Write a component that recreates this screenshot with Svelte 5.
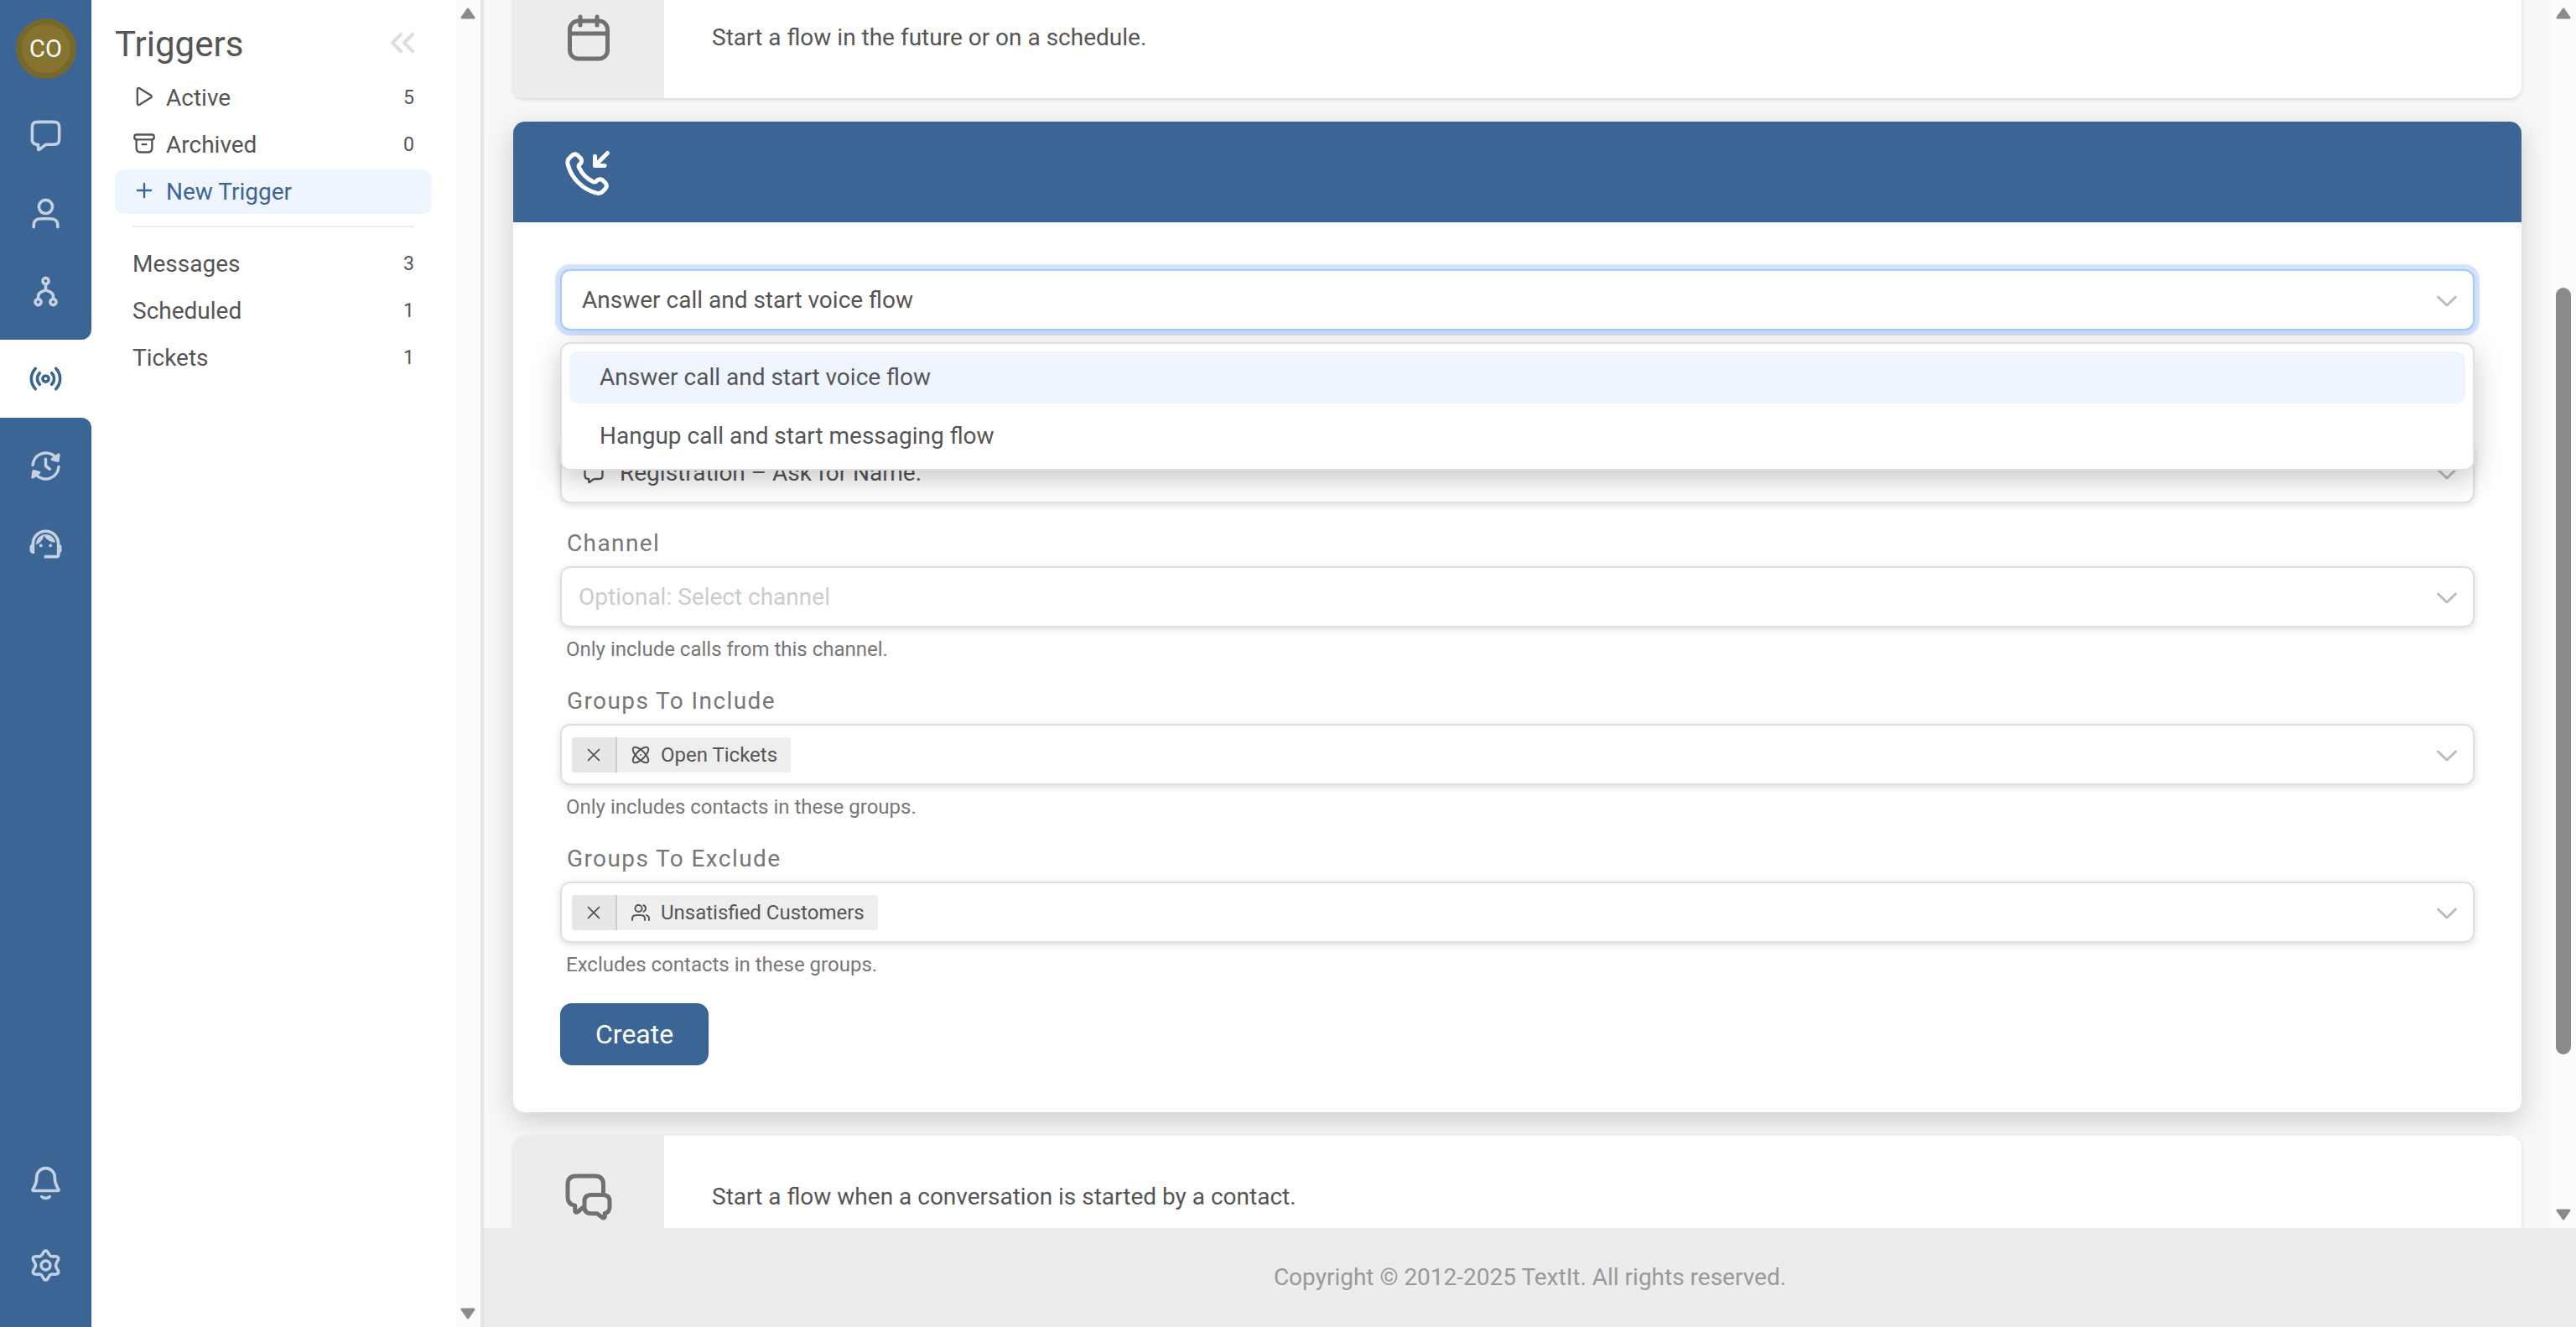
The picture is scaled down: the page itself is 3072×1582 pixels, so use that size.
<script>
  const railTop = [
    { name: 'Messages', icon: 'message' },
    { name: 'Contacts', icon: 'contact' },
    { name: 'Flows', icon: 'flow' },
  ];
  const railRest = [
    { name: 'Campaigns', icon: 'campaign' },
    { name: 'Tickets', icon: 'agent' },
  ];
  const railBottom = [
    { name: 'Notifications', icon: 'bell' },
    { name: 'Settings', icon: 'settings' },
  ];

  const folders = [
    { name: 'Active', icon: 'play', count: 5 },
    { name: 'Archived', icon: 'archive', count: 0 },
    { name: 'New Trigger', icon: 'plus', selected: true },
  ];
  const types = [
    { name: 'Messages', count: 3 },
    { name: 'Scheduled', count: 1 },
    { name: 'Tickets', count: 1 },
  ];

  const actions = ['Answer call and start voice flow', 'Hangup call and start messaging flow'];
  let action = $state(actions[0]);

  let groupFields = $state([
    {
      id: 'include',
      label: 'Groups To Include',
      help: 'Only includes contacts in these groups.',
      groups: [{ name: 'Open Tickets', icon: 'smart' }],
    },
    {
      id: 'exclude',
      label: 'Groups To Exclude',
      help: 'Excludes contacts in these groups.',
      groups: [{ name: 'Unsatisfied Customers', icon: 'group' }],
    },
  ]);

  // share of the scroll track, in percent
  const thumb = { before: 22.2, size: 65.3 };

  function removeGroup(field, name) {
    field.groups = field.groups.filter((g) => g.name !== name);
  }
</script>

{#snippet icon(name)}
  <svg class="icon" viewBox="0 0 24 24" aria-hidden="true">
    {#if name === 'message'}
      <path d="M7 18V20.3C7 20.9 7 21.1 7.1 21.3C7.2 21.4 7.35 21.46 7.5 21.46C7.7 21.46 7.9 21.3 8.3 20.96L10.7 19.05C11.2 18.66 11.4 18.47 11.7 18.33C11.9 18.2 12.2 18.1 12.45 18.06C12.75 18 13.06 18 13.7 18H16.2C17.9 18 18.7 18 19.4 17.67C19.9 17.4 20.4 16.9 20.7 16.36C21 15.7 21 14.9 21 13.2V7.8C21 6.1 21 5.3 20.7 4.64C20.4 4.07 19.9 3.6 19.4 3.33C18.7 3 17.9 3 16.2 3H7.8C6.1 3 5.3 3 4.64 3.33C4.07 3.6 3.6 4.07 3.33 4.64C3 5.3 3 6.1 3 7.8V14C3 14.9 3 15.4 3.1 15.8C3.4 16.8 4.2 17.6 5.2 17.9C5.6 18 6.1 18 7 18Z" />
    {:else if name === 'contact'}
      <path d="M20 21C20 19.6 20 18.9 19.8 18.3C19.4 17.1 18.4 16.1 17.2 15.7C16.6 15.5 15.9 15.5 14.5 15.5H9.5C8.1 15.5 7.4 15.5 6.8 15.7C5.6 16.1 4.6 17.1 4.2 18.3C4 18.9 4 19.6 4 21" />
      <circle cx="12" cy="7.5" r="4.5" />
    {:else if name === 'flow'}
      <circle cx="12" cy="5" r="2" />
      <circle cx="7" cy="19" r="2" />
      <circle cx="17" cy="19" r="2" />
      <path d="M12 7V10.2M7 17V15.4C7 13.8 7.7 12.9 9 12.3L11 11.5C11.8 11.2 12 10.8 12 10.2C12 10.8 12.2 11.2 13 11.5L15 12.3C16.3 12.9 17 13.8 17 15.4V17" />
    {:else if name === 'trigger'}
      <circle cx="12" cy="12" r="2" />
      <path d="M8 8.2C5.9 10.4 5.9 13.6 8 15.8M16 8.2C18.1 10.4 18.1 13.6 16 15.8M5.2 5.2C1.5 9.2 1.5 14.8 5.2 18.8M18.8 5.2C22.5 9.2 22.5 14.8 18.8 18.8" />
    {:else if name === 'campaign'}
      <path d="M3.4 11.4A8.7 8.7 0 0 1 18.4 6.1M20.6 12.6A8.7 8.7 0 0 1 5.6 17.9M12 7.4V12L14.6 14" />
      <path class="filled" d="M20.6 4.6L20 8.5L16.4 7.6ZM3.4 19.4L4 15.5L7.6 16.4Z" />
    {:else if name === 'agent'}
      <g class="glyph">
        <path d="M21 12.22C21 6.73 16.74 3 12 3c-4.69 0-9 3.65-9 9.28-.6.34-1 .98-1 1.72v2c0 1.1.9 2 2 2h1v-6.1c0-3.87 3.13-7 7-7s7 3.13 7 7V19h-8v2h8c1.1 0 2-.9 2-2v-1.22c.59-.31 1-.92 1-1.64v-2.3c0-.7-.41-1.31-1-1.62z" />
        <circle cx="9" cy="13" r="1" />
        <circle cx="15" cy="13" r="1" />
        <path d="M18 11.03C17.52 8.18 15.04 6 12.05 6c-3.03 0-6.29 2.51-6.03 6.45 2.47-1.01 4.33-3.21 4.86-5.89 1.31 2.63 4 4.44 7.12 4.47z" />
      </g>
    {:else if name === 'bell'}
      <path d="M9.35 21C10.06 21.6 10.98 22 12 22C13 22 13.94 21.6 14.65 21M18 8C18 6.4 17.4 4.9 16.2 3.76C15.1 2.6 13.6 2 12 2C10.4 2 8.9 2.6 7.76 3.76C6.6 4.9 6 6.4 6 8C6 11.1 5.2 13.2 4.35 14.6C3.6 15.8 3.25 16.4 3.26 16.54C3.28 16.7 3.3 16.8 3.46 16.9C3.6 17 4.2 17 5.4 17H18.6C19.8 17 20.4 17 20.54 16.9C20.7 16.8 20.72 16.7 20.74 16.54C20.75 16.4 20.4 15.8 19.65 14.6C18.8 13.2 18 11.1 18 8Z" />
    {:else if name === 'settings'}
      <circle cx="12" cy="12" r="3" />
      <path d="M12 2.2C13 2.2 13.5 3.1 14.1 4.4C14.7 5.8 15.4 6.2 16.8 6.1C18.4 5.9 19.6 5.7 20.3 6.8C20.9 7.9 20.3 8.8 19.4 10C18.5 11.3 18.5 12.7 19.4 14C20.3 15.2 20.9 16.1 20.3 17.2C19.6 18.3 18.4 18.1 16.8 17.9C15.4 17.8 14.7 18.2 14.1 19.6C13.5 20.9 13 21.8 12 21.8C11 21.8 10.5 20.9 9.9 19.6C9.3 18.2 8.6 17.8 7.2 17.9C5.6 18.1 4.4 18.3 3.7 17.2C3.1 16.1 3.7 15.2 4.6 14C5.5 12.7 5.5 11.3 4.6 10C3.7 8.8 3.1 7.9 3.7 6.8C4.4 5.7 5.6 5.9 7.2 6.1C8.6 6.2 9.3 5.8 9.9 4.4C10.5 3.1 11 2.2 12 2.2Z" />
    {:else if name === 'play'}
      <path d="M5 4.9C5 3.5 6.1 2.9 7.2 3.6L18.9 10.9C19.8 11.5 19.8 12.5 18.9 13.1L7.2 20.4C6.1 21.1 5 20.5 5 19.1Z" />
    {:else if name === 'archive'}
      <rect x="2" y="3" width="20" height="5" rx="2" />
      <path d="M4 8V16.5C4 19.6 5.2 21 8.2 21H15.8C18.8 21 20 19.6 20 16.5V8M10 13H14" />
    {:else if name === 'plus'}
      <path d="M12 5V19M5 12H19" />
    {:else if name === 'collapse'}
      <path d="M18 17L13 12L18 7M11 17L6 12L11 7" />
    {:else if name === 'calendar'}
      <rect x="3" y="4" width="18" height="18" rx="4" />
      <path d="M3 10H21M16 2V6M8 2V6" />
    {:else if name === 'call'}
      <path transform="translate(-1 1)" d="M8.4 8.85C9.1 10.3 10 11.7 11.2 12.9C12.4 14.1 13.8 15 15.2 15.7C15.4 15.8 15.4 15.8 15.5 15.82C15.8 15.9 16.1 15.8 16.4 15.7C16.4 15.6 16.5 15.6 16.6 15.46C17 15.1 17.1 14.9 17.3 14.8C18 14.4 18.8 14.4 19.5 14.8C19.7 14.9 19.8 15.1 20.2 15.46L20.4 15.65C20.9 16.2 21.2 16.4 21.3 16.7C21.6 17.3 21.6 18 21.3 18.5C21.2 18.8 20.9 19.1 20.4 19.6L20.2 19.8C19.7 20.3 19.4 20.6 19.1 20.8C18.7 21 18 21.16 17.6 21.16C17.2 21.16 16.9 21.1 16.3 20.9C13.3 20.1 10.4 18.4 8 16C5.7 13.7 4 10.8 3.2 7.8C3 7.2 2.93 6.9 2.93 6.5C2.93 6 3.1 5.4 3.3 5C3.5 4.7 3.8 4.4 4.3 3.9L4.5 3.7C5 3.2 5.3 2.9 5.55 2.77C6.1 2.5 6.8 2.5 7.36 2.77C7.6 2.9 7.9 3.2 8.4 3.7L8.6 3.9C9 4.3 9.2 4.4 9.27 4.6C9.7 5.3 9.7 6.1 9.27 6.8C9.2 7 9 7.1 8.6 7.5C8.5 7.6 8.5 7.7 8.4 7.7C8.2 8 8.2 8.3 8.27 8.6C8.3 8.7 8.3 8.7 8.4 8.85Z" />
      <path d="M15 4.5V9H19.6M15 9L21 3" />
    {:else if name === 'conversation'}
      <path d="M9 17.2L6.9 19C6.2 19.6 5.5 19.3 5.5 18.5V16.1C3.4 15.8 2 14.5 2 12V6C2 3.3 3.3 2 6 2H15C17.7 2 19 3.3 19 6V11" />
      <path d="M13.4 11H18.6C20.8 11 22 12 22 14V16.6C22 18.6 21.2 19.5 19.7 19.8V21.3C19.7 22 19 22.2 18.4 21.7L16 19.9H13.4C11.2 19.9 10 18.9 10 16.9V14C10 12 11.2 11 13.4 11Z" />
    {:else if name === 'chevron'}
      <path d="M1.5 8L12 18L22.5 8" />
    {:else if name === 'close'}
      <path d="M19 5L5 19M5 5L19 19" />
    {:else if name === 'smart'}
      <ellipse cx="12" cy="12" rx="5" ry="12" transform="rotate(45 12 12)" />
      <ellipse cx="12" cy="12" rx="5" ry="12" transform="rotate(-45 12 12)" />
      <path d="M12 12H12.01" />
    {:else if name === 'group'}
      <path d="M2 21C2 19.1 2 18.2 2.3 17.5C2.7 16.5 3.5 15.7 4.5 15.3C5.2 15 6.1 15 8 15H11C12.9 15 13.8 15 14.5 15.3C15.5 15.7 16.3 16.5 16.7 17.5C17 18.2 17 19.1 17 21M22 21V19C22 17.1 20.7 15.6 19 15.1M15.5 3.3C17 3.9 18 5.3 18 7C18 8.7 17 10.1 15.5 10.7" />
      <circle cx="9.5" cy="7" r="4" />
    {/if}
  </svg>
{/snippet}

{#snippet railItem(item)}
  <a class="rail-item" href="#{item.icon}" aria-label={item.name}>{@render icon(item.icon)}</a>
{/snippet}

{#snippet menuItem(item)}
  <a class="menu-item" class:selected={item.selected} href="#{item.name}">
    {#if item.icon}{@render icon(item.icon)}{/if}
    <span class="name">{item.name}</span>
    {#if item.count !== undefined}<span class="count">{item.count}</span>{/if}
  </a>
{/snippet}

{#snippet arrow(direction)}
  <svg class="arrow {direction}" viewBox="0 0 18 14" aria-hidden="true">
    <path d="M9 2L16 12H2Z" />
  </svg>
{/snippet}

<div class="app">
  <nav class="rail">
    <div class="rail-top">
      <button class="avatar">CO</button>
      {#each railTop as item}{@render railItem(item)}{/each}
    </div>
    <a class="rail-item current" href="#trigger" aria-label="Triggers">{@render icon('trigger')}</a>
    <div class="rail-rest">
      {#each railRest as item}{@render railItem(item)}{/each}
      <div class="rail-bottom">
        {#each railBottom as item}{@render railItem(item)}{/each}
      </div>
    </div>
  </nav>

  <aside class="menu">
    <div class="menu-header">
      <h1>Triggers</h1>
      <button class="collapse" aria-label="Collapse menu">{@render icon('collapse')}</button>
    </div>
    <div class="menu-list">
      {#each folders as item}{@render menuItem(item)}{/each}
    </div>
    <hr />
    <div class="menu-list">
      {#each types as item}{@render menuItem(item)}{/each}
    </div>
  </aside>

  <div class="scrollbar">
    {@render arrow('up')}
    {@render arrow('down')}
  </div>

  <div class="main">
    <div class="viewport">
      <div class="cards">
        <section class="card closed">
          <div class="card-icon">{@render icon('calendar')}</div>
          <p>Start a flow in the future or on a schedule.</p>
        </section>

        <section class="card open">
          <div class="card-header">{@render icon('call')}</div>
          <form onsubmit={(e) => e.preventDefault()}>
            <div class="field action">
              <div class="box focused">
                <select bind:value={action} aria-label="Action">
                  {#each actions as option}<option>{option}</option>{/each}
                </select>
                {@render icon('chevron')}
              </div>
              <div class="options" role="listbox" aria-label="Actions">
                {#each actions as option}
                  <button
                    type="button"
                    role="option"
                    aria-selected={option === action}
                    class:selected={option === action}
                    onclick={() => (action = option)}>{option}</button>
                {/each}
              </div>
            </div>

            <div class="field">
              <div class="box">
                {@render icon('message')}
                <select aria-label="Flow"><option>Registration – Ask for Name.</option></select>
                {@render icon('chevron')}
              </div>
            </div>

            <div class="field">
              <label for="channel">Channel</label>
              <div class="box empty">
                <select id="channel"><option>Optional: Select channel</option></select>
                {@render icon('chevron')}
              </div>
              <p class="help">Only include calls from this channel.</p>
            </div>

            {#each groupFields as field}
              <div class="field">
                <label for={field.id}>{field.label}</label>
                <div class="box multi">
                  {#each field.groups as group}
                    <span class="chip">
                      <button
                        type="button"
                        aria-label="Remove {group.name}"
                        onclick={() => removeGroup(field, group.name)}>{@render icon('close')}</button>
                      {@render icon(group.icon)}
                      <span>{group.name}</span>
                    </span>
                  {/each}
                  <input id={field.id} type="text" />
                  {@render icon('chevron')}
                </div>
                <p class="help">{field.help}</p>
              </div>
            {/each}

            <button class="create">Create</button>
          </form>
        </section>

        <section class="card closed">
          <div class="card-icon">{@render icon('conversation')}</div>
          <p>Start a flow when a conversation is started by a contact.</p>
        </section>
      </div>

      <div class="scrollbar">
        {@render arrow('up')}
        <div class="track">
          <div class="thumb" style="top: {thumb.before}%; height: {thumb.size}%"></div>
        </div>
        {@render arrow('down')}
      </div>
    </div>

    <footer>Copyright © 2012-2025 TextIt. All rights reserved.</footer>
  </div>
</div>

<style>
  :global(body) {
    margin: 0;
  }

  .app {
    --primary: #3a6595;
    --text: #555;
    display: flex;
    height: 100vh;
    overflow: hidden;
    background: #fff;
    color: var(--text);
    font-family: Roboto, 'Liberation Sans', sans-serif;
    font-size: 28px;
    line-height: 36px;
  }

  .app * {
    box-sizing: border-box;
  }

  a {
    color: inherit;
    text-decoration: none;
  }

  p {
    margin: 0;
  }

  button,
  select,
  input {
    margin: 0;
    padding: 0;
    border: 0;
    background: none;
    color: inherit;
    font: inherit;
  }

  .icon {
    flex: none;
    width: 28px;
    height: 28px;
    fill: none;
    stroke: currentColor;
    stroke-width: 2;
    stroke-linecap: round;
    stroke-linejoin: round;
    overflow: visible;
  }

  .filled {
    fill: currentColor;
  }

  .glyph {
    fill: currentColor;
    stroke: none;
    transform: scale(1.06);
    transform-origin: center;
  }

  /* left rail */
  .rail {
    flex: none;
    display: flex;
    flex-direction: column;
    width: 109px;
    color: #c5d1e0;
  }

  .rail-top,
  .rail-rest {
    display: flex;
    flex-direction: column;
    align-items: center;
    background: var(--primary);
  }

  .rail-top {
    padding: 22px 0 11px;
    border-bottom-right-radius: 12px;
  }

  .rail-rest {
    flex: 1;
    padding: 11px 0 27px;
    border-top-right-radius: 12px;
  }

  .rail-bottom {
    display: flex;
    flex-direction: column;
    gap: 5px;
    margin-top: auto;
  }

  .rail-item {
    display: flex;
    align-items: center;
    justify-content: center;
    height: 93px;
  }

  .rail-item.current {
    color: var(--primary);
  }

  .rail-item .icon {
    width: 43px;
    height: 43px;
  }

  .avatar {
    width: 72px;
    height: 72px;
    margin-bottom: 21px;
    border: 7px solid #76682a;
    border-radius: 50%;
    background: #85732f;
    color: #fff;
    font-size: 29px;
  }

  /* folder menu */
  .menu {
    flex: none;
    width: 434px;
    padding: 28px 28px 0 28px;
  }

  .menu-header {
    display: flex;
    align-items: center;
    justify-content: space-between;
    height: 50px;
    margin-bottom: 12px;
    padding-right: 11px;
  }

  h1 {
    margin: 0;
    font-size: 42px;
    font-weight: 400;
    line-height: 50px;
  }

  .collapse {
    display: flex;
    margin-bottom: 4px;
    color: #ddd;
  }

  .collapse .icon {
    width: 48px;
    height: 48px;
  }

  .menu-list {
    display: flex;
    flex-direction: column;
    gap: 3px;
  }

  .menu-item {
    display: flex;
    align-items: center;
    gap: 12px;
    height: 53px;
    padding: 0 21px;
    border-radius: 12px;
  }

  .menu-item.selected {
    background: #eef5ff;
    color: var(--primary);
  }

  .menu-item .icon {
    margin-bottom: 4px;
  }

  .menu-item .name {
    flex: 1;
  }

  .menu-item .count {
    font-size: 23px;
  }

  hr {
    height: 2px;
    margin: 14px 21px 17px;
    border: 0;
    background: #eee;
  }

  /* scrollbars */
  .scrollbar {
    flex: none;
    display: flex;
    flex-direction: column;
    align-items: center;
    justify-content: space-between;
    width: 30px;
    padding: 9px 0;
    background: #fcfcfc;
  }

  .arrow {
    flex: none;
    width: 18px;
    height: 14px;
    fill: #8b8b8b;
    stroke: #8b8b8b;
    stroke-width: 3;
    stroke-linejoin: round;
  }

  .arrow.down {
    transform: rotate(180deg);
  }

  .track {
    position: relative;
    flex: 1;
    width: 18px;
    margin: 9px 0;
  }

  .thumb {
    position: absolute;
    width: 100%;
    border-radius: 9px;
    background: #8b8b8b;
  }

  /* content */
  .main {
    flex: 1;
    display: flex;
    flex-direction: column;
    min-width: 0;
    border-left: 4px solid #e4e4e4;
  }

  .viewport {
    flex: 1;
    display: flex;
    min-height: 0;
    overflow: hidden;
    background: #f7f7f7;
  }

  .cards {
    flex: 1;
    display: flex;
    flex-direction: column;
    gap: 28px;
    min-width: 0;
    margin-top: -28px;
    padding: 0 35px;
    overflow: hidden;
  }

  .card {
    flex: none;
    border-radius: 14px;
    background: #fff;
    box-shadow: 0 2px 5px rgba(0, 0, 0, 0.12);
  }

  .card.open {
    box-shadow: 0 10px 32px rgba(0, 0, 0, 0.17);
  }

  .card.closed {
    position: relative;
    display: flex;
    align-items: center;
    height: 145px;
    overflow: hidden;
  }

  .card-icon {
    display: flex;
    align-items: center;
    justify-content: center;
    align-self: stretch;
    width: 180px;
    margin-right: 57px;
    background: #ececec;
    color: #717171;
  }

  .card-icon .icon,
  .card-header .icon {
    width: 60px;
    height: 60px;
  }

  .card-header {
    display: flex;
    align-items: center;
    height: 120px;
    padding: 0 60px;
    border-radius: 14px 14px 0 0;
    background: var(--primary);
    color: #fff;
  }

  form {
    display: flex;
    flex-direction: column;
    align-items: flex-start;
    gap: 32px;
    padding: 56px;
  }

  .field {
    align-self: stretch;
  }

  .field.action {
    position: relative;
    margin-bottom: 101px;
  }

  label {
    display: block;
    margin: 0 0 11px 8px;
    color: #777;
    line-height: 32px;
    letter-spacing: 0.05em;
  }

  .box {
    display: flex;
    align-items: center;
    height: 73px;
    padding: 0 19px 0 24px;
    border: 2px solid #e0e0e0;
    border-radius: 12px;
    background: #fff;
    box-shadow: 0 2px 10px rgba(0, 0, 0, 0.14);
  }

  .box > .icon:first-child {
    margin-right: 17px;
  }

  .box > .icon:last-child {
    width: 24px;
    height: 24px;
    color: #bbb;
    stroke-width: 3;
  }

  .box.focused {
    border-color: #a4cafe;
    box-shadow:
      0 0 0 6px rgba(164, 202, 254, 0.45),
      0 2px 12px rgba(0, 0, 0, 0.16);
  }

  .box.empty {
    padding-left: 20px;
  }

  .box.empty select {
    color: #ccc;
  }

  .box.multi {
    padding-left: 12px;
  }

  select,
  input {
    flex: 1;
    align-self: stretch;
    min-width: 0;
    outline: none;
    appearance: none;
  }

  .options {
    position: absolute;
    z-index: 1;
    top: 100%;
    left: 0;
    right: 0;
    display: flex;
    flex-direction: column;
    gap: 8px;
    margin-top: 14px;
    padding: 9px 9px 8px;
    border: 2px solid #e0e0e0;
    border-radius: 12px;
    background: #fff;
    box-shadow: 0 10px 34px rgba(0, 0, 0, 0.22);
  }

  .options button {
    height: 62px;
    padding: 0 36px;
    border-radius: 10px;
    text-align: left;
  }

  .options .selected {
    background: #eef5ff;
  }

  .help {
    margin: 12px 0 0 7px;
    color: #777;
    font-size: 24px;
    line-height: 28px;
  }

  .chip {
    display: flex;
    align-items: center;
    height: 42px;
    padding-right: 16px;
    border-radius: 4px;
    background: #eee;
    font-size: 24px;
    overflow: hidden;
  }

  .chip button {
    display: flex;
    align-items: center;
    justify-content: center;
    align-self: stretch;
    width: 54px;
    margin-right: 16px;
    border-right: 2px solid #ccc;
    background: #e7e7e7;
  }

  .chip .icon {
    width: 24px;
    height: 24px;
  }

  .chip > .icon {
    margin-right: 12px;
  }

  .chip button .icon {
    width: 22px;
    height: 22px;
  }

  .create {
    height: 74px;
    padding: 0 42px;
    border-radius: 14px;
    background: var(--primary);
    color: #fff;
    font-size: 32px;
  }

  footer {
    display: flex;
    align-items: center;
    justify-content: center;
    height: 118px;
    background: #ececec;
    color: #999;
  }
</style>
